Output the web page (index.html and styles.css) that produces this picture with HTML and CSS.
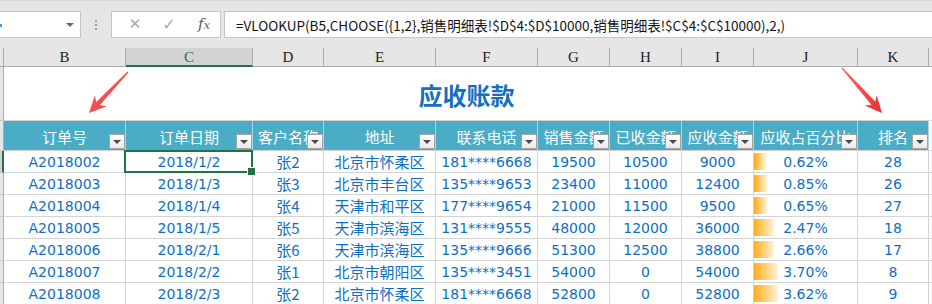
FILE: index.html
```html
<!DOCTYPE html>
<html lang="zh">
<head>
<meta charset="utf-8">
<title>应收账款</title>
<link rel="stylesheet" href="styles.css">
</head>
<body>
<div class="app">
  <div class="fbar">
    <div class="namebox"><span class="nb-mark"></span><span class="nb-arrow"></span></div>
    <div class="dots"><i></i><i></i><i></i></div>
    <div class="tools">
      <span class="tool x">✕</span>
      <span class="tool ok">✓</span>
      <span class="tool fx">f<small>x</small></span>
    </div>
    <div class="formula">=VLOOKUP(B5,CHOOSE({1,2},销售明细表!$D$4:$D$10000,销售明细表!$C$4:$C$10000),2,)</div>
  </div>

  <div class="sheet">
    <!-- column letters -->
    <div class="ch stub"></div>
    <div class="ch">B</div>
    <div class="ch cur">C</div>
    <div class="ch">D</div>
    <div class="ch">E</div>
    <div class="ch">F</div>
    <div class="ch">G</div>
    <div class="ch">H</div>
    <div class="ch">I</div>
    <div class="ch">J</div>
    <div class="ch">K</div>
    <div class="ch rest"></div>

    <!-- title -->
    <div class="rh"></div>
    <div class="title">应收账款</div>
    <div class="c blank"></div>

    <!-- table header -->
    <div class="rh"></div>
    <div class="th">订单号<span class="flt"></span></div>
    <div class="th">订单日期<span class="flt"></span></div>
    <div class="th">客户名称<span class="flt"></span></div>
    <div class="th">地址<span class="flt"></span></div>
    <div class="th">联系电话<span class="flt"></span></div>
    <div class="th">销售金额<span class="flt"></span></div>
    <div class="th">已收金额<span class="flt"></span></div>
    <div class="th">应收金额<span class="flt"></span></div>
    <div class="th">应收占百分比<span class="flt"></span></div>
    <div class="th">排名<span class="flt"></span></div>
    <div class="c blank"></div>

    <!-- rows -->
    <div class="rh rh-sel"></div>
    <div class="c">A2018002</div><div class="c sel">2018/1/2</div><div class="c cj">张2</div><div class="c cj">北京市怀柔区</div><div class="c">181****6668</div><div class="c">19500</div><div class="c">10500</div><div class="c">9000</div><div class="c bar"><span class="db" style="width:12px"></span><span class="pv">0.62%</span></div><div class="c">28</div><div class="c blank"></div>

    <div class="rh"></div>
    <div class="c">A2018003</div><div class="c">2018/1/3</div><div class="c cj">张3</div><div class="c cj">北京市丰台区</div><div class="c">135****9653</div><div class="c">23400</div><div class="c">11000</div><div class="c">12400</div><div class="c bar"><span class="db" style="width:13px"></span><span class="pv">0.85%</span></div><div class="c">26</div><div class="c blank"></div>

    <div class="rh"></div>
    <div class="c">A2018004</div><div class="c">2018/1/4</div><div class="c cj">张4</div><div class="c cj">天津市和平区</div><div class="c">177****9654</div><div class="c">21000</div><div class="c">11500</div><div class="c">9500</div><div class="c bar"><span class="db" style="width:13px"></span><span class="pv">0.65%</span></div><div class="c">27</div><div class="c blank"></div>

    <div class="rh"></div>
    <div class="c">A2018005</div><div class="c">2018/1/5</div><div class="c cj">张5</div><div class="c cj">天津市滨海区</div><div class="c">131****9555</div><div class="c">48000</div><div class="c">12000</div><div class="c">36000</div><div class="c bar"><span class="db" style="width:20px"></span><span class="pv">2.47%</span></div><div class="c">18</div><div class="c blank"></div>

    <div class="rh"></div>
    <div class="c">A2018006</div><div class="c">2018/2/1</div><div class="c cj">张6</div><div class="c cj">天津市滨海区</div><div class="c">135****9666</div><div class="c">51300</div><div class="c">12500</div><div class="c">38800</div><div class="c bar"><span class="db" style="width:20px"></span><span class="pv">2.66%</span></div><div class="c">17</div><div class="c blank"></div>

    <div class="rh"></div>
    <div class="c">A2018007</div><div class="c">2018/2/2</div><div class="c cj">张1</div><div class="c cj">北京市朝阳区</div><div class="c">135****3451</div><div class="c">54000</div><div class="c">0</div><div class="c">54000</div><div class="c bar"><span class="db" style="width:24px"></span><span class="pv">3.70%</span></div><div class="c">8</div><div class="c blank"></div>

    <div class="rh"></div>
    <div class="c">A2018008</div><div class="c">2018/2/3</div><div class="c cj">张2</div><div class="c cj">北京市怀柔区</div><div class="c">181****6668</div><div class="c">52800</div><div class="c">0</div><div class="c">52800</div><div class="c bar"><span class="db" style="width:24px"></span><span class="pv">3.62%</span></div><div class="c">9</div><div class="c blank"></div>

    <svg class="arrows" width="932" height="304" viewBox="0 48 932 304" aria-hidden="true">
      <defs>
        <linearGradient id="ar" x1="0" y1="0" x2="1" y2="1">
          <stop offset="0" stop-color="#ff6b6b"/>
          <stop offset="1" stop-color="#e8302f"/>
        </linearGradient>
      </defs>
      <polygon fill="url(#ar)" points="89,113 106.5,106.2 99.8,105.3 128.5,72.5 127.5,71.5 96.2,101.9 94.9,95.2"/>
      <polygon fill="url(#ar)" points="882,113 864.7,105.6 871.5,105 841.5,68.5 842.5,67.5 875.3,101.6 876.7,95"/>
    </svg>
  </div>
</div>
</body>
</html>
```

FILE: styles.css
```css
* { box-sizing: border-box; }
html, body { margin: 0; padding: 0; }
body {
  width: 932px;
  height: 304px;
  overflow: hidden;
  background: #ffffff;
  font-family: "DejaVu Sans", "Noto Sans CJK SC", sans-serif;
}
.app { width: 932px; }

/* ---------- formula bar ---------- */
.fbar {
  height: 48px;
  background: #e6e6e6;
  border-top: 1px solid #d6d6d6;
  display: flex;
  align-items: flex-start;
  padding-top: 10px;
}
.namebox {
  width: 81px;
  height: 27px;
  background: #fff;
  border: 1px solid #c6c6c6;
  border-left: none;
  position: relative;
  display: flex;
  align-items: center;
  justify-content: flex-end;
  padding-right: 6px;
}
.nb-mark {
  position: absolute;
  left: 0;
  top: 12px;
  width: 2px;
  height: 3px;
  background: #3e9be0;
}
.nb-arrow {
  width: 0;
  height: 0;
  border-left: 4px solid transparent;
  border-right: 4px solid transparent;
  border-top: 4px solid #666;
}
.dots {
  width: 30px;
  height: 27px;
  display: flex;
  flex-direction: column;
  align-items: center;
  justify-content: center;
  gap: 2px;
}
.dots i {
  display: block;
  width: 2px;
  height: 2px;
  background: #a2a2a2;
}
.tools {
  width: 110px;
  height: 27px;
  background: #fff;
  border: 1px solid #c6c6c6;
  display: flex;
  align-items: center;
  padding-left: 6px;
}
.tool {
  width: 36px;
  text-align: center;
  color: #a8a8a8;
  font-size: 15px;
  line-height: 1;
}
.tool.ok { font-size: 16px; }
.tool.fx {
  font-family: "DejaVu Serif", "Liberation Serif", serif;
  font-style: italic;
  color: #5e5e5e;
  font-size: 15px;
  padding-left: 2px;
}
.tool.fx small { font-size: 11px; }
.formula {
  flex: 1;
  margin-left: 3px;
  height: 27px;
  background: #fff;
  border: 1px solid #c6c6c6;
  border-right: none;
  padding-left: 11px;
  display: flex;
  align-items: center;
  font-family: "Noto Sans CJK SC", sans-serif;
  font-size: 13.5px;
  color: #111;
  white-space: nowrap;
  overflow: hidden;
}

/* ---------- sheet grid ---------- */
.sheet {
  position: relative;
  display: grid;
  grid-template-columns: 4px 122px 127px 71px 112px 102px 72px 72px 72px 104px 71px 1fr;
  grid-template-rows: 19px 54px 30px repeat(7, 22px);
}

.ch {
  background: #e6e6e6;
  border-right: 1px solid #ababab;
  border-bottom: 1px solid #ababab;
  display: flex;
  align-items: center;
  justify-content: center;
  font-family: "Liberation Serif", "DejaVu Serif", serif;
  font-size: 15px;
  color: #222;
  padding-top: 1px;
}
.ch.cur {
  background: #d3d3d3;
  color: #217346;
  border-bottom: 2px solid #217346;
}
.ch.rest { border-right: none; }

.rh {
  background: #e6e6e6;
  border-right: 1px solid #ababab;
  border-bottom: 1px solid #c8c8c8;
}
.rh-sel {
  background: #d3d3d3;
  border-right: 2px solid #217346;
}

.title {
  grid-column: 2 / 12;
  border-bottom: 1px solid #d4d4d4;
  display: flex;
  align-items: center;
  justify-content: center;
  font-family: "Noto Sans CJK SC", sans-serif;
  font-weight: 700;
  font-size: 24px;
  color: #1370c2;
  padding-top: 2px;
}

.th {
  position: relative;
  background: #4bacc6;
  border-right: 1px solid #a9d6e3;
  border-bottom: 1px solid #d4d4d4;
  display: flex;
  align-items: center;
  justify-content: center;
  font-family: "Noto Sans CJK SC", sans-serif;
  font-size: 15px;
  color: #fff;
  white-space: nowrap;
  overflow: hidden;
  padding-top: 1px;
}
.flt {
  position: absolute;
  right: 0;
  bottom: 1px;
  width: 16px;
  height: 15px;
  border: 1px solid #a3a3a3;
  background: linear-gradient(#ffffff, #e9e9ee);
  display: flex;
  align-items: center;
  justify-content: center;
}
.flt::after {
  content: "";
  width: 0;
  height: 0;
  border-left: 4px solid transparent;
  border-right: 4px solid transparent;
  border-top: 4px solid #4a4a4a;
  margin-top: 1px;
}

.c {
  border-right: 1px solid #d4d4d4;
  border-bottom: 1px solid #d4d4d4;
  display: flex;
  align-items: center;
  justify-content: center;
  font-size: 14px;
  color: #0d6fc4;
  white-space: nowrap;
  overflow: hidden;
  background: #fff;
}
.c.cj {
  font-family: "Noto Sans CJK SC", sans-serif;
  font-size: 15px;
}
.c.blank { border-right: none; }
.title + .c.blank { border-bottom: 1px solid #d4d4d4; }

.c.bar { position: relative; }
.db {
  position: absolute;
  left: 0;
  top: 2px;
  bottom: 2px;
  background: linear-gradient(to right, #ffb22a 0%, #ffc75e 35%, #fff3dd 100%);
  border-left: 1px solid #ffa619;
}
.pv { position: relative; }

.c.sel {
  position: relative;
  overflow: visible;
  z-index: 2;
}
.c.sel::before {
  content: "";
  position: absolute;
  top: -1px;
  left: -2px;
  right: -1px;
  bottom: -1px;
  border: 2px solid #217346;
  pointer-events: none;
}
.c.sel::after {
  content: "";
  position: absolute;
  right: -4px;
  bottom: -4px;
  width: 7px;
  height: 7px;
  background: #217346;
  border: 1px solid #fff;
}

.arrows {
  position: absolute;
  left: 0;
  top: 0;
  pointer-events: none;
  z-index: 5;
  overflow: visible;
}
```
